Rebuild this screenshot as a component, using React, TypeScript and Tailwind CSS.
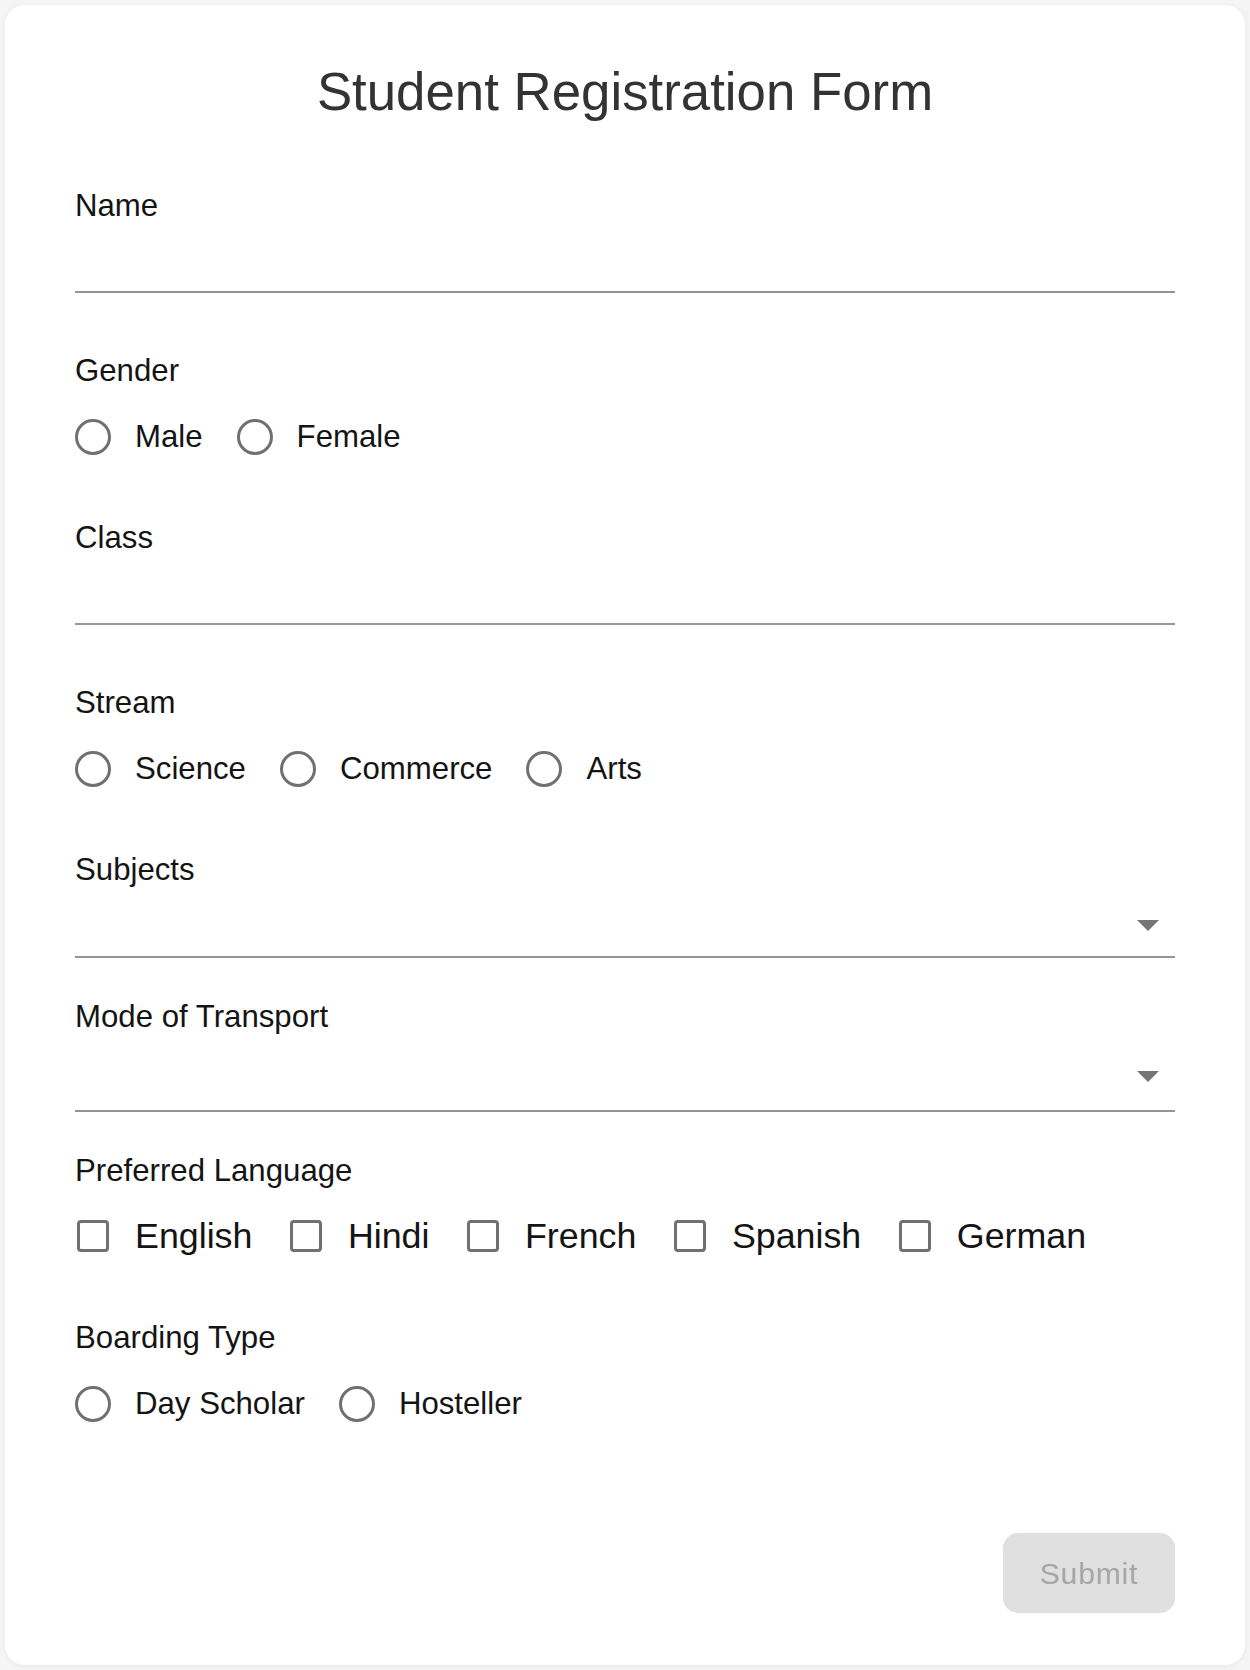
import React, { useState } from 'react';

// Registration form: labels, underlined fields, radio / checkbox groups
const font = "font-['Liberation_Sans','Helvetica',Arial,sans-serif]";

function Label({ text, className = '' }: { text: string; className?: string }) {
    return <div className={`text-[31.2px] leading-[36px] text-[#141414] ${className}`}>{text}</div>;
}

function RadioGroup({ name, options, value, onChange, className = '' }: {
    name: string;
    options: string[];
    value: string;
    onChange: (v: string) => void;
    className?: string;
}) {
    return (
        <div className={`flex h-[45px] items-center gap-[34px] ${className}`}>
            {options.map(opt => (
                <label key={opt} className="flex cursor-pointer items-center" onClick={() => onChange(opt)}>
                    <span className="flex h-[36px] w-[36px] items-center justify-center rounded-full border-[3px] border-[#707070]">
                        {value === opt && <span className="h-[16px] w-[16px] rounded-full bg-[#707070]" />}
                    </span>
                    <span className="ml-[24px] text-[31.2px] leading-[36px] text-[#141414]">{opt}</span>
                    <input type="radio" name={name} className="hidden" readOnly checked={value === opt} />
                </label>
            ))}
        </div>
    );
}

function Select({ height, arrowTop }: { height: string; arrowTop: string }) {
    return (
        <div className={`flex justify-end border-b-2 border-[#949494] pr-[16px] ${height} ${arrowTop}`}>
            <svg width="22" height="11" viewBox="0 0 22 11">
                <polygon points="0,0 22,0 11,11" fill="#757575" />
            </svg>
        </div>
    );
}

export default function App() {
    const [gender, setGender] = useState('');
    const [stream, setStream] = useState('');
    const [boarding, setBoarding] = useState('');
    const [langs, setLangs] = useState<string[]>([]);

    const toggleLang = (l: string) =>
        setLangs(prev => (prev.includes(l) ? prev.filter(x => x !== l) : [...prev, l]));

    return (
        <div className={`min-h-[1670px] w-full bg-[#f5f5f5] p-[5px] ${font}`}>
            <div className="flex flex-col rounded-[20px] bg-white px-[70px] pt-[57px] pb-[52px] shadow-[0_1px_6px_rgba(0,0,0,0.06)]">
                <h1 className="text-center text-[52.8px] leading-[60px] text-[#333333]">Student Registration Form</h1>

                {/* Name */}
                <Label text="Name" className="mt-[66px]" />
                <div className="h-[69px] border-b-2 border-[#949494]" />

                {/* Gender */}
                <Label text="Gender" className="mt-[60px]" />
                <RadioGroup name="gender" options={['Male', 'Female']} value={gender} onChange={setGender} className="mt-[25px]" />

                {/* Class */}
                <Label text="Class" className="mt-[61px]" />
                <div className="h-[69px] border-b-2 border-[#949494]" />

                {/* Stream */}
                <Label text="Stream" className="mt-[60px]" />
                <RadioGroup name="stream" options={['Science', 'Commerce', 'Arts']} value={stream} onChange={setStream} className="mt-[25px]" />

                {/* Subjects */}
                <Label text="Subjects" className="mt-[61px]" />
                <Select height="h-[70px]" arrowTop="pt-[32px]" />

                {/* Transport */}
                <Label text="Mode of Transport" className="mt-[41px]" />
                <Select height="h-[77px]" arrowTop="pt-[36px]" />

                {/* Languages */}
                <Label text="Preferred Language" className="mt-[41px]" />
                <div className="mt-[24px] flex h-[45px] items-center gap-[35.5px]">
                    {['English', 'Hindi', 'French', 'Spanish', 'German'].map(l => (
                        <label key={l} className="flex cursor-pointer items-center" onClick={() => toggleLang(l)}>
                            <span className="flex h-[36px] w-[36px] items-center justify-center">
                                <span className={`h-[32px] w-[32px] rounded-[4px] border-[3px] border-[#707070] ${langs.includes(l) ? 'bg-[#707070]' : ''}`} />
                            </span>
                            <span className="ml-[24px] text-[35.8px] leading-[42px] text-[#141414]">{l}</span>
                        </label>
                    ))}
                </div>

                {/* Boarding */}
                <Label text="Boarding Type" className="mt-[62px]" />
                <RadioGroup name="boarding" options={['Day Scholar', 'Hosteller']} value={boarding} onChange={setBoarding} className="mt-[25px]" />

                <button
                    disabled
                    className="mt-[107px] h-[80px] w-[172px] self-end rounded-[15px] bg-[#e0e0e0] text-[30px] tracking-[0.86px] text-[#a6a6a6]"
                >
                    Submit
                </button>
            </div>
        </div>
    );
}
